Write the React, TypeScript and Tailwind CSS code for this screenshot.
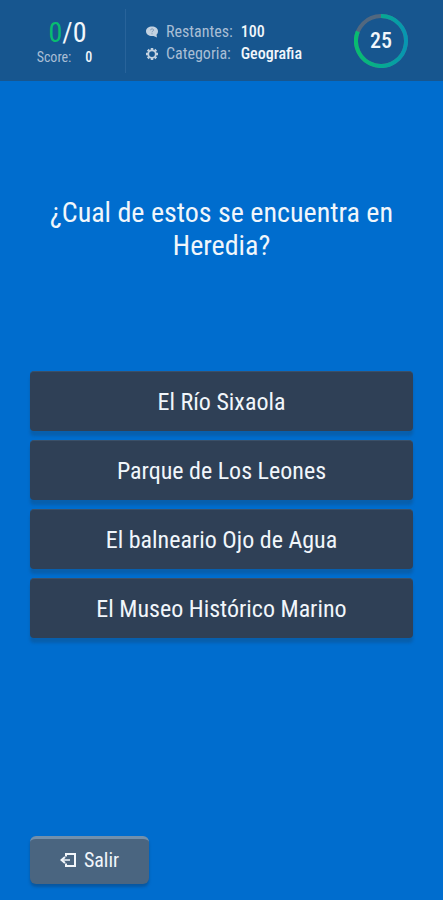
import React from "react";

const seconds = 25;

const options = [
  "El Río Sixaola",
  "Parque de Los Leones",
  "El balneario Ojo de Agua",
  "El Museo Histórico Marino",
];

function HelpBubbleIcon() {
  return (
    <svg className="size-3" viewBox="0 0 24 24" aria-hidden="true">
      <path
        fill="#c3d2e1"
        d="M12 1C5.500 1 0 5 0 10.600s5.500 9.600 12 9.600c1 0 2-.1 3-.4l7 3.200-1-5.600c1.900-1.700 3-4.100 3-6.800C24 5 18.500 1 12 1z"
      />
      <path
        d="M9 8.500c.2-3.600 6.300-3.500 6.100-.4-.1 2.300-3.100 2.300-3.100 4.400M12 14.500v2"
        fill="none"
        stroke="#7c98b5"
        strokeWidth="2"
      />
    </svg>
  );
}

function GearIcon() {
  return (
    <svg className="size-3" viewBox="0 0 24 24" fill="none" stroke="#c3d2e1" aria-hidden="true">
      <circle cx="12" cy="12" r="7.500" strokeWidth="3.500" />
      <path
        strokeWidth="5"
        d="M12 0v4M12 20v4M0 12h4M20 12h4M3.500 3.500l2.800 2.800M17.700 17.700l2.800 2.800M3.500 20.500l2.800-2.800M17.700 6.300l2.800-2.800"
      />
    </svg>
  );
}

function ExitIcon() {
  return (
    <svg className="h-4 w-4" viewBox="0 0 16 16" fill="none" stroke="#f1f6fb" strokeWidth="2" aria-hidden="true">
      <path d="M6 4.500V2h9v12H6v-2.500" />
      <path d="M1.500 8H10" strokeWidth="1.500" />
      <path d="M5 5L1.500 8 5 11" />
    </svg>
  );
}

function Timer({ value }: { value: number }) {
  return (
    <div className="grid size-[54px] place-items-center" role="timer">
      <svg className="col-start-1 row-start-1 size-full" viewBox="0 0 54 54" fill="none" strokeWidth="4" aria-hidden="true">
        <defs>
          <linearGradient id="ring" x1="0" y1="0" x2="1" y2="0">
            <stop offset="0" stopColor="#08bd70" />
            <stop offset="0.5" stopColor="#06aa91" />
            <stop offset="1" stopColor="#0796b2" />
          </linearGradient>
        </defs>
        <circle cx="27" cy="27" r="25" stroke="#52687f" />
        <path d="M27 2A25 25 0 1 1 3.800 17.600" stroke="url(#ring)" />
      </svg>
      <span className="col-start-1 row-start-1 text-[22px] leading-6 font-medium">{value}</span>
    </div>
  );
}

export default function App() {
  return (
    <div className="flex min-h-screen flex-col bg-[#006dce] font-['Roboto_Condensed','Liberation_Sans_Narrow',Roboto,sans-serif] text-[#f1f6fb]">
      <header className="flex h-[81px] items-center bg-[#17568f]">
        <div className="flex w-[125px] flex-col items-center pt-px pl-1">
          <div className="pl-1.5 text-[28px] leading-8">
            <span className="text-[#08bd70]">0</span>/0
          </div>
          <div className="flex gap-3.5 text-sm leading-4">
            <span className="text-[#a9bed5]">Score:</span>
            <span className="font-medium">0</span>
          </div>
        </div>
        <div className="h-16 border-l border-[#28639a]" />
        <dl className="mt-1 ml-5 grid grid-cols-[auto_auto_auto] items-center gap-x-2 text-base leading-[22px] text-[#a9bed5]">
          <HelpBubbleIcon />
          <dt>Restantes:</dt>
          <dd className="font-medium text-[#f1f6fb]">100</dd>
          <GearIcon />
          <dt>Categoria:</dt>
          <dd className="font-medium text-[#f1f6fb]">Geografia</dd>
        </dl>
        <div className="mr-[35px] ml-auto">
          <Timer value={seconds} />
        </div>
      </header>

      <main className="flex flex-1 flex-col px-[30px] pb-4">
        <h1 className="mt-[115px] text-center text-[28px] leading-[33px]">¿Cual de estos se encuentra en Heredia?</h1>
        <div className="mt-[109px] flex flex-col gap-[9px]">
          {options.map((option) => (
            <button
              key={option}
              type="button"
              className="h-[60px] rounded-[4px] border-t border-[#3b5068] bg-[#2f4056] text-2xl shadow-[0_5px_3px_#075fad]"
            >
              {option}
            </button>
          ))}
        </div>
        <button
          type="button"
          className="mt-auto flex h-12 w-[119px] items-center justify-center gap-2 rounded-md border-t-3 border-[#7290ac] bg-[#4a6580] pb-1 text-xl leading-6 shadow-[0_3px_3px_#0757a0]"
        >
          <ExitIcon />
          Salir
        </button>
      </main>
    </div>
  );
}
